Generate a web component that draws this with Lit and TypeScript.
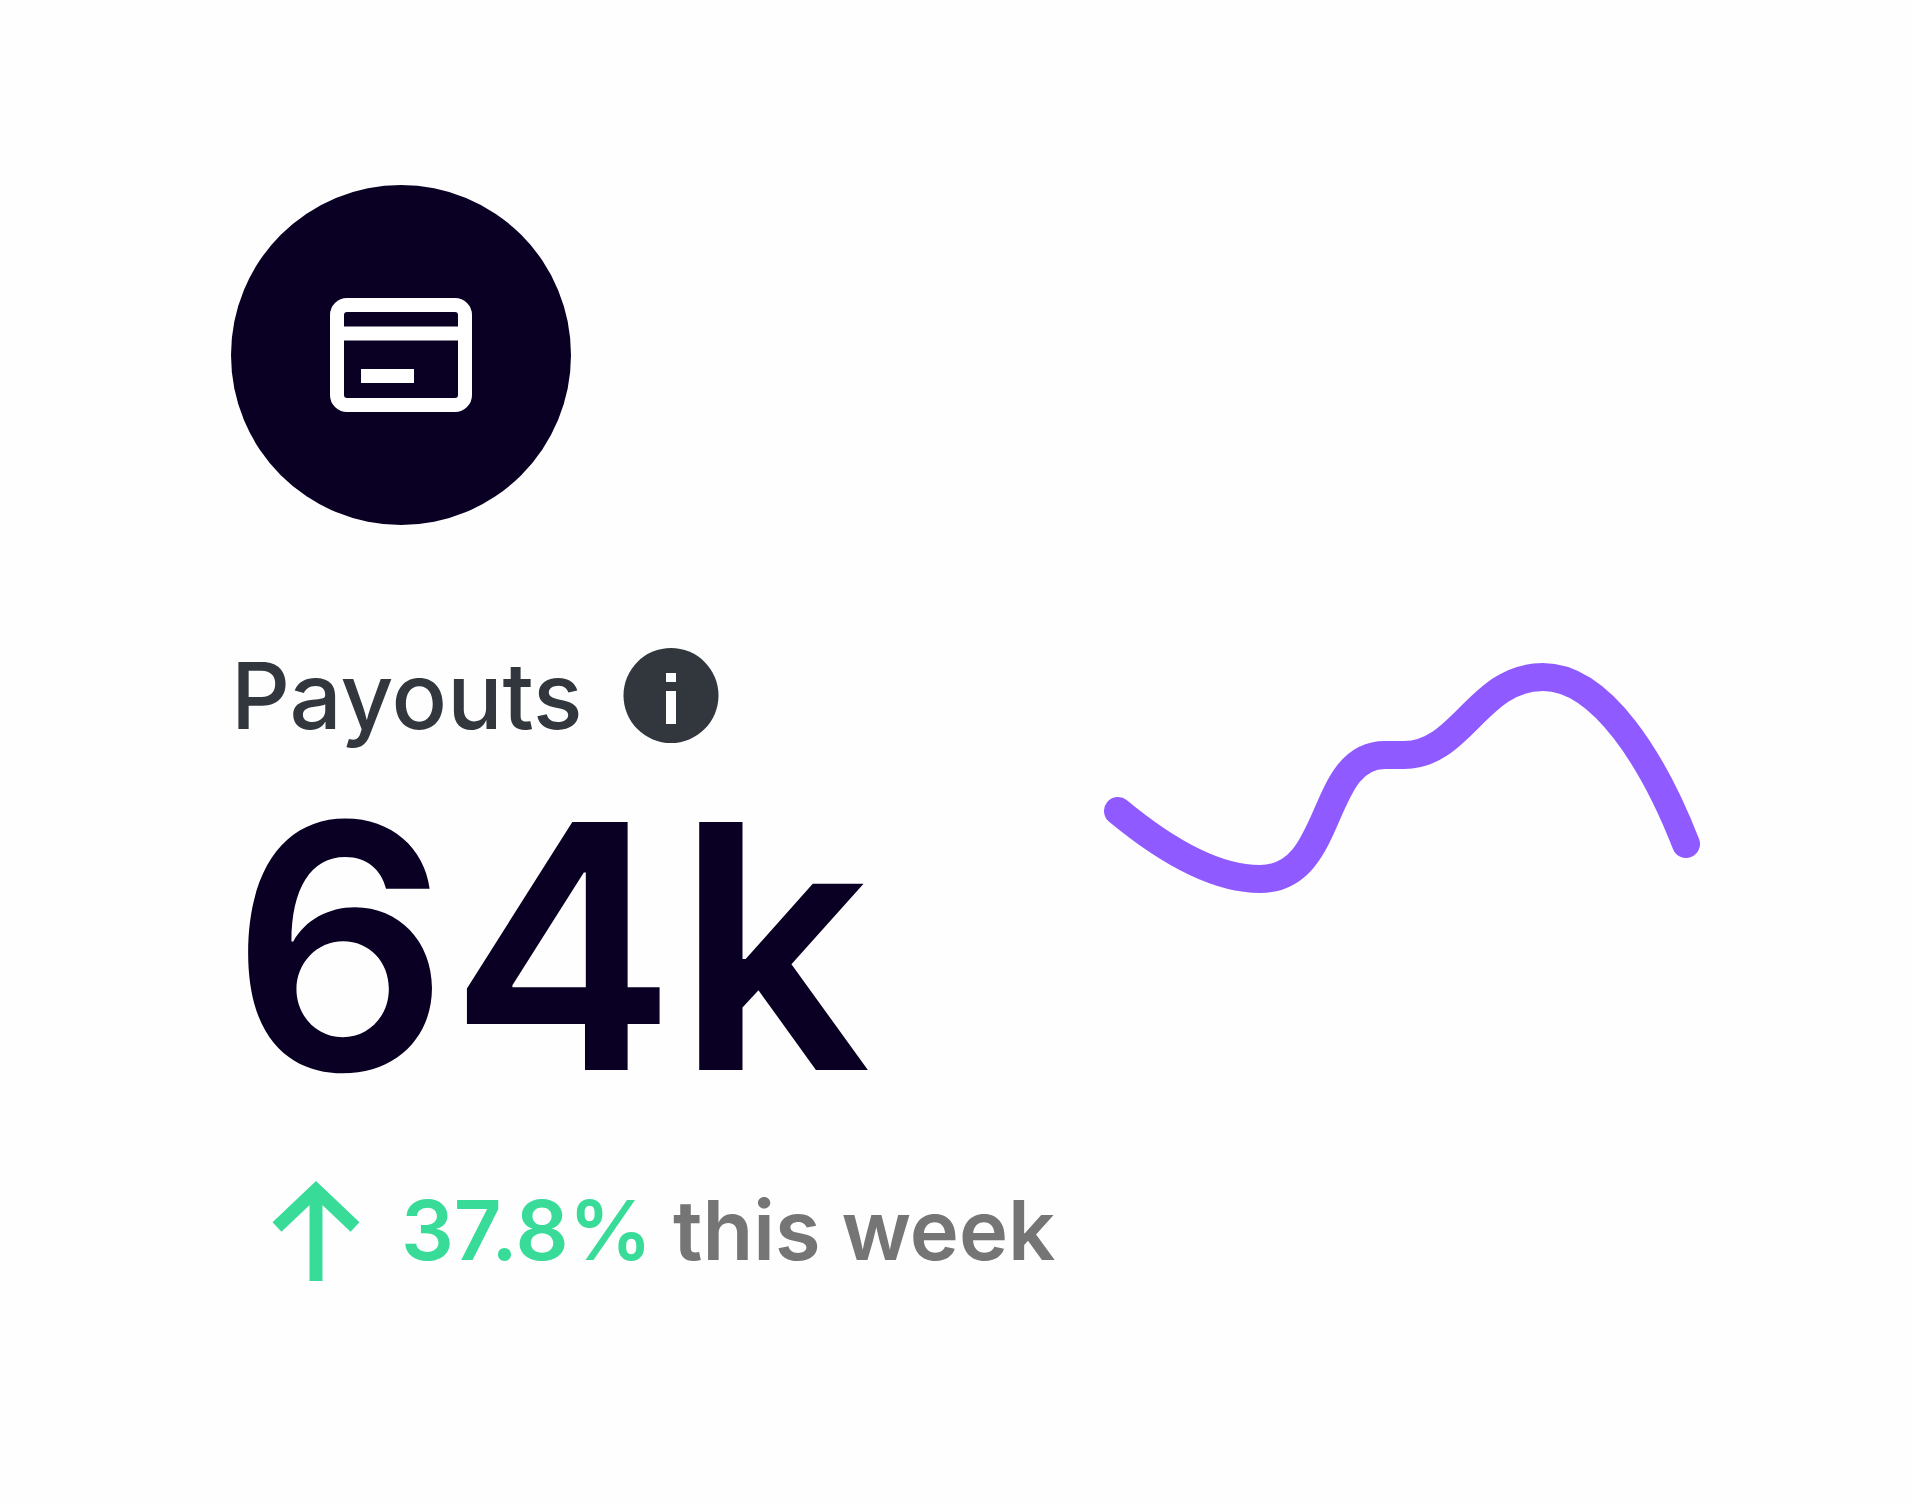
import { LitElement, html, css } from "lit";
import { customElement } from "lit/decorators.js";

@customElement("app-root")
export class AppRoot extends LitElement {
  static styles = css`
    :host {
      display: block;
      min-height: 100vh;
      background: #fefefe;
      font-family: Inter, "Liberation Sans", sans-serif;
    }
    .card {
      box-sizing: border-box;
      padding: 185px 212px 185px 231px;
    }
    .badge {
      display: flex;
      align-items: center;
      justify-content: center;
      width: 340px;
      height: 340px;
      border-radius: 50%;
      background: #090024;
    }
    .badge svg,
    .info svg,
    .arrow,
    .trend {
      display: block;
      flex: none;
    }
    .body {
      display: flex;
      align-items: flex-start;
      justify-content: space-between;
      margin-top: 115px;
    }
    .label {
      display: flex;
      align-items: center;
      gap: 40px;
      margin: 0;
      color: #32373e;
      font-size: 92px;
      font-weight: 500;
      line-height: 112px;
    }
    .info {
      padding: 0;
      border: 0;
      background: none;
      cursor: pointer;
    }
    .value {
      margin: 24px 0 62px;
      color: #090024;
      font-size: 341px;
      font-weight: 600;
      line-height: 340px;
    }
    .change {
      display: flex;
      align-items: center;
      gap: 36px;
      margin: 0;
      padding-left: 36px;
      color: #757575;
      font-size: 83px;
      font-weight: 600;
      line-height: 104px;
      white-space: nowrap;
    }
    .rise {
      color: #38db98;
    }
    .trend {
      margin-top: 20px;
    }
  `;

  render() {
    return html`
      <main class="card">
        <div class="badge">
          <svg width="142" height="114" viewBox="0 0 142 114" fill="none" stroke="#fff" stroke-width="14" aria-hidden="true">
            <rect x="7" y="7" width="128" height="100" rx="10" />
            <path d="M7 35.500H135M31 78H84" />
          </svg>
        </div>
        <div class="body">
          <section>
            <h1 class="label">
              Payouts
              <button class="info" type="button" aria-label="About payouts">
                <svg width="96" height="96" viewBox="0 0 96 96" aria-hidden="true">
                  <circle cx="48" cy="47.500" r="47.500" fill="#32373e" />
                  <path d="M43 25h10v9h-10zM43 43h10v33h-10z" fill="#fff" />
                </svg>
              </button>
            </h1>
            <p class="value">64k</p>
            <p class="change">
              <svg class="arrow" width="98" height="104" viewBox="0 0 98 104" fill="none" stroke="#38db98" stroke-width="13" aria-hidden="true">
                <path d="M49 103V14M10 49L49 12L88 49" />
              </svg>
              <span><span class="rise">37.8%</span> this week</span>
            </p>
          </section>
          <svg class="trend" width="596" height="236" viewBox="1104 660 596 236" fill="none" stroke="#8f5aff" stroke-width="28" stroke-linecap="round" role="img" aria-label="Payouts trend">
            <path d="M1118 811C1170 854 1218 879 1260 879C1336 879 1318 755 1385 755H1404C1462 755 1478 677 1543 677C1602 677 1654 762 1686 844" />
          </svg>
        </div>
      </main>
    `;
  }
}
